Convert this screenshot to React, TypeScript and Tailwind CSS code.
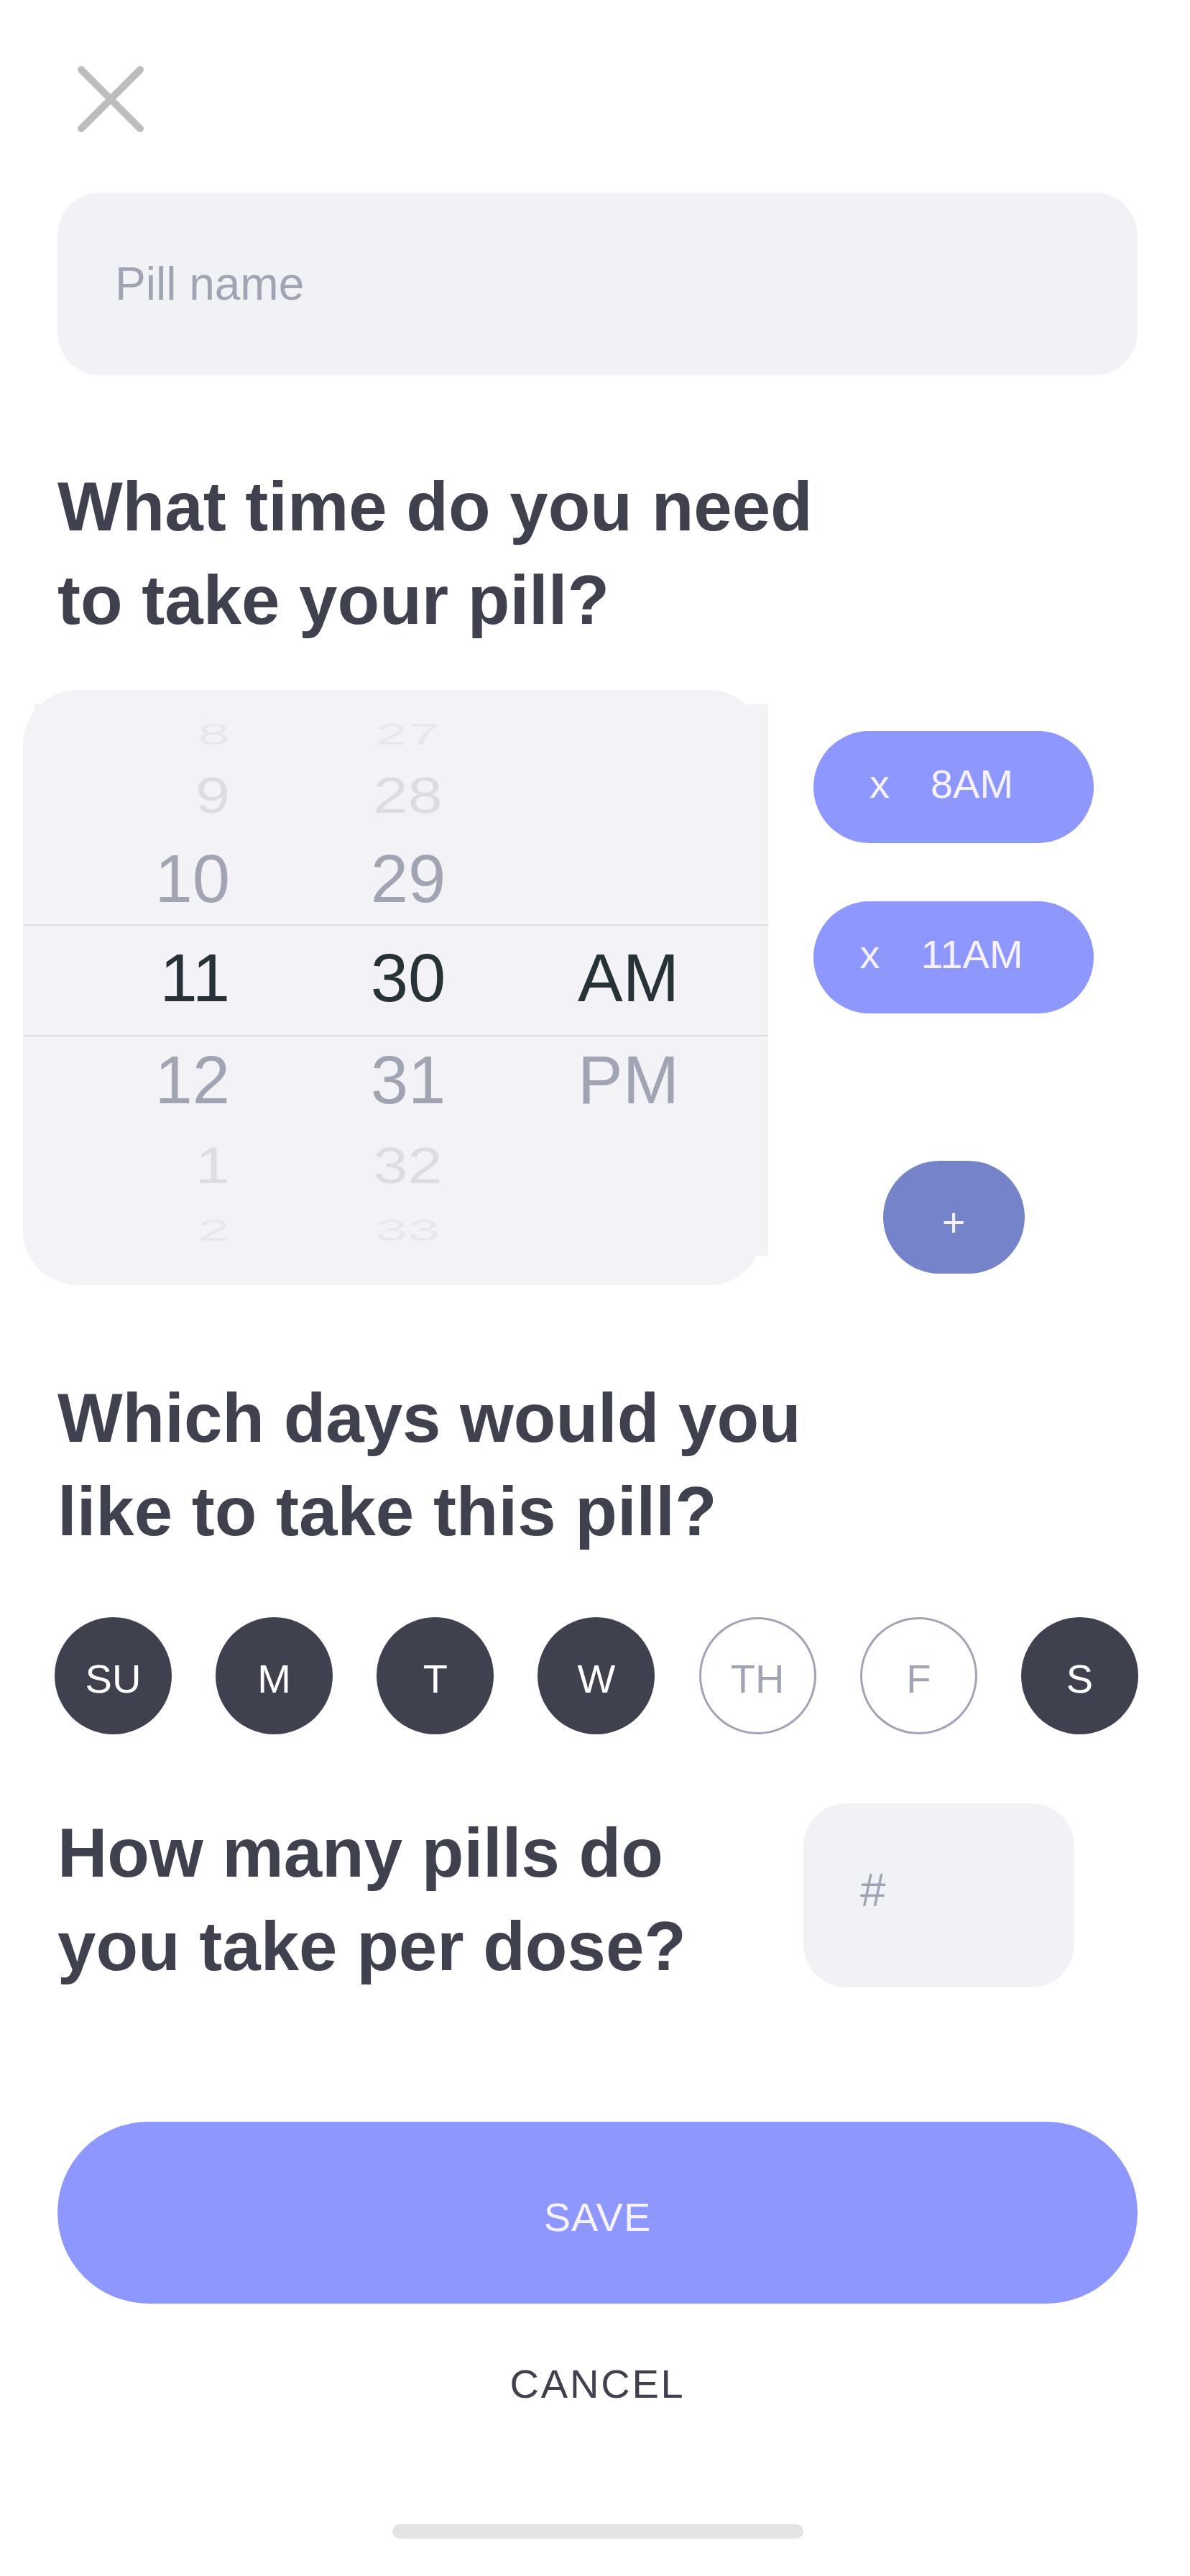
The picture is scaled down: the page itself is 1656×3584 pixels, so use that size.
import React from "react";

const levelCls: Record<number, string> = {
  0: "text-[#263238]",
  1: "text-[#a1a4b2]",
  2: "text-[#dcdde3] scale-x-[0.92] scale-y-[0.75]",
  3: "text-[#e7e7ed] scale-x-[0.86] scale-y-[0.46]",
};

function PickerRow({
  hour,
  minute,
  ampm,
  level,
  className,
}: {
  hour: string;
  minute: string;
  ampm?: string;
  level: number;
  className: string;
}) {
  return (
    <div className={`flex items-center ${className}`}>
      <div className={`w-[288px] shrink-0 text-right origin-right ${levelCls[level]}`}>{hour}</div>
      <div className={`w-[484px] shrink-0 pl-[12px] text-center ${levelCls[level]}`}>{minute}</div>
      <div className={`flex-1 text-left ${levelCls[level]}`}>{ampm ?? ""}</div>
    </div>
  );
}

function TimeTag({ label }: { label: string }) {
  return (
    <div className="flex h-[156px] w-[390px] items-center justify-center gap-[57px] rounded-full bg-[#8e97fd] pb-[8px] pr-[34px] text-[56px] leading-none text-[#f6f1fb]">
      <span>x</span>
      <span>{label}</span>
    </div>
  );
}

function Day({ label, on }: { label: string; on: boolean }) {
  return (
    <div
      className={
        on
          ? "flex h-[163px] w-[163px] items-center justify-center rounded-full bg-[#3f414e] pt-[8px] text-[56px] leading-none text-white"
          : "flex h-[163px] w-[163px] items-center justify-center rounded-full border-[3px] border-[#a1a4b2] pt-[8px] text-[56px] leading-none text-[#a1a4b2]"
      }
    >
      {label}
    </div>
  );
}

export default function App() {
  const days: [string, boolean][] = [
    ["SU", true],
    ["M", true],
    ["T", true],
    ["W", true],
    ["TH", false],
    ["F", false],
    ["S", true],
  ];
  return (
    <div className="min-h-[3584px] w-[1656px] overflow-hidden bg-white font-['Liberation_Sans',Arial,sans-serif]">
      <div className="flex flex-col pl-[80px] pr-[73px] pt-[92px]">
        {/* close */}
        <div className="ml-[28px] h-[92px] w-[92px]">
          <svg width="92" height="92" viewBox="0 0 92 92" fill="none">
            <path d="M5 5 L87 87 M87 5 L5 87" stroke="#bdbdbd" strokeWidth="10" strokeLinecap="round" />
          </svg>
        </div>

        {/* pill name */}
        <div className="mt-[84px] flex h-[254px] items-center rounded-[60px] bg-[#f1f2f6] pl-[80px] text-[64px] text-[#a1a4b2]">
          Pill name
        </div>

        {/* heading 1 */}
        <h1 className="mt-[118px] text-[96px] font-bold leading-[130px] text-[#3f414e]">
          What time do you need
          <br />
          to take your pill?
        </h1>

        {/* picker + tags */}
        <div className="-ml-[48px] mt-[60px] flex items-start">
          <div className="h-[828px] w-[1030px] shrink-0 rounded-[76px] bg-[#f2f2f7] pl-[16px] pt-[20px]">
            <div className="h-[767px] w-[1021px] bg-[#f2f2f7]">
              <div className="-ml-[16px] flex w-[1037px] flex-col text-[94px] leading-none">
                <PickerRow hour="8" minute="27" level={3} className="h-[82px]" />
                <PickerRow hour="9" minute="28" level={2} className="h-[90px]" />
                <PickerRow hour="10" minute="29" level={1} className="h-[134px] pt-[8px]" />
                <PickerRow
                  hour="11"
                  minute="30"
                  ampm="AM"
                  level={0}
                  className="h-[156px] border-y-2 border-[#dedee3] pb-[7px]"
                />
                <PickerRow hour="12" minute="31" ampm="PM" level={1} className="h-[122px]" />
                <PickerRow hour="1" minute="32" level={2} className="h-[116px]" />
                <PickerRow hour="2" minute="33" level={3} className="h-[62px]" />
              </div>
            </div>
          </div>

          <div className="ml-[70px] flex w-[390px] shrink-0 flex-col items-center">
            <div className="mt-[57px]">
              <TimeTag label="8AM" />
            </div>
            <div className="mt-[81px]">
              <TimeTag label="11AM" />
            </div>
            <div className="mt-[205px] flex h-[157px] w-[197px] items-center justify-center rounded-full bg-[#7583ca] pt-[14px] text-[56px] leading-none text-[#f6f1fb]">
              +
            </div>
          </div>
        </div>

        {/* heading 2 */}
        <h2 className="mt-[120px] text-[96px] font-bold leading-[130px] text-[#3f414e]">
          Which days would you
          <br />
          like to take this pill?
        </h2>

        {/* days */}
        <div className="-ml-[4px] mt-[82px] flex w-[1508px] items-center justify-between">
          {days.map(([l, on]) => (
            <Day key={l} label={l} on={on} />
          ))}
        </div>

        {/* heading 3 + count */}
        <div className="mt-[96px] flex items-start pr-[88px]">
          <h3 className="mt-[4px] text-[96px] font-bold leading-[130px] text-[#3f414e]">
            How many pills do
            <br />
            you take per dose?
          </h3>
          <div className="ml-auto flex h-[256px] w-[377px] shrink-0 items-center rounded-[60px] bg-[#f1f2f6] pb-[14px] pl-[79px] text-[64px] leading-none text-[#a1a4b2]">
            #
          </div>
        </div>

        {/* save */}
        <div className="mt-[179px] flex h-[253px] items-center justify-center rounded-full bg-[#8e97fd] pt-[12px] text-[56px] leading-none tracking-[0.02em] text-[#f6f1fb]">
          SAVE
        </div>

        {/* cancel */}
        <div className="mt-[80px] text-center text-[56px] leading-[64px] tracking-[0.05em] text-[#3f414e]">
          CANCEL
        </div>

        {/* home indicator */}
        <div className="mx-auto mt-[163px] h-[20px] w-[572px] rounded-full bg-[#e4e4e4]" />
      </div>
    </div>
  );
}
